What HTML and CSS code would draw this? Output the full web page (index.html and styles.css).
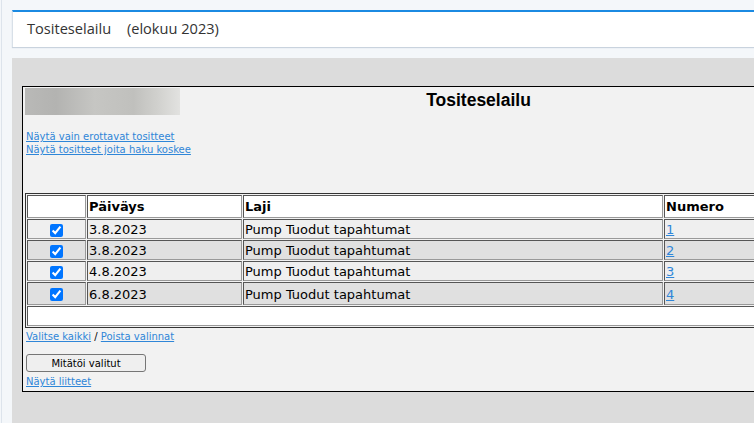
FILE: index.html
```html
<!DOCTYPE html>
<html lang="fi">
<head>
    <meta charset="UTF-8">
    <title>Tositeselailu</title>
    <link rel="stylesheet" href="styles.css">
</head>
<body>
    <div class="page">
        <div class="topbar">
            Tositeselailu <span class="period">(elokuu 2023)</span>
        </div>
        <div class="content">
            <div class="box">
                <div class="head">
                    <div class="logo"></div>
                    <h1>Tositeselailu</h1>
                    <div></div>
                </div>
                <div class="links">
                    <a href="#">Näytä vain erottavat tositteet</a><br>
                    <a href="#">Näytä tositteet joita haku koskee</a>
                </div>
                <table class="list">
                    <tr class="th">
                        <td class="chk"></td>
                        <td class="date">Päiväys</td>
                        <td class="kind">Laji</td>
                        <td class="num">Numero</td>
                    </tr>
                    <tr class="odd">
                        <td class="chk"><input type="checkbox" checked></td>
                        <td>3.8.2023</td>
                        <td>Pump Tuodut tapahtumat</td>
                        <td><a href="#">1</a></td>
                    </tr>
                    <tr class="even">
                        <td class="chk"><input type="checkbox" checked></td>
                        <td>3.8.2023</td>
                        <td>Pump Tuodut tapahtumat</td>
                        <td><a href="#">2</a></td>
                    </tr>
                    <tr class="odd">
                        <td class="chk"><input type="checkbox" checked></td>
                        <td>4.8.2023</td>
                        <td>Pump Tuodut tapahtumat</td>
                        <td><a href="#">3</a></td>
                    </tr>
                    <tr class="even tall">
                        <td class="chk"><input type="checkbox" checked></td>
                        <td>6.8.2023</td>
                        <td>Pump Tuodut tapahtumat</td>
                        <td><a href="#">4</a></td>
                    </tr>
                    <tr class="foot">
                        <td colspan="4">&nbsp;</td>
                    </tr>
                </table>
                <div class="select">
                    <a href="#">Valitse kaikki</a> / <a href="#">Poista valinnat</a>
                </div>
                <button class="cancel">Mitätöi valitut</button>
                <div class="attach"><a href="#">Näytä liitteet</a></div>
            </div>
        </div>
    </div>
</body>
</html>
```

FILE: styles.css
```css
html, body {
    margin: 0;
    padding: 0;
    overflow: hidden;
}
body {
    background: #f4f7fa;
    font-family: 'DejaVu Sans', Verdana, sans-serif;
    height: 423px;
}
.page {
    width: 1000px;
    padding: 10px 0 0 12px;
    border-left: 1px solid #dde4ec;
    margin-left: 1px;
    box-sizing: border-box;
    height: 423px;
}
.topbar {
    margin-left: -2px;
    background: #fff;
    border-top: 2px solid #1b8ae2;
    border-left: 1px solid #d8e0e8;
    box-shadow: 0 1px 1px #c9d3de;
    height: 35px;
    line-height: 33px;
    padding-left: 14px;
    font-family: 'Open Sans', sans-serif;
    font-size: 14.6px;
    color: #333;
}
.period {
    margin-left: 12px;
}
.content {
    margin: 11px 0 0 -2px;
    background: #dcdcdc;
    padding: 28px 0 0 10px;
    height: 400px;
}
.box {
    width: 906px;
    background: #f2f2f2;
    border: 1px solid #000;
    padding: 1px 0 3px 3px;
    font-size: 10px;
}
.head {
    display: grid;
    grid-template-columns: 155px 1fr 155px;
    align-items: start;
    margin-left: -1px;
}
.logo {
    height: 27px;
    background: linear-gradient(90deg, #b9b9b7 0%, #b3b3b1 20%, #c6c6c3 45%, #c0c0bd 70%, #d0d0cd 85%, #e2e2e0 100%);
}
.head h1 {
    margin: 2px 0 0;
    text-align: center;
    font-family: 'Liberation Sans', Arial, sans-serif;
    font-size: 17.5px;
    font-weight: bold;
    color: #000;
}
a {
    color: #2f86d8;
}
.links {
    margin-top: 15px;
    line-height: 13px;
}
.list {
    margin: 37px 0 0 -1px;
    border: 1px solid #333;
    border-spacing: 1px;
    background: #f2f2f2;
    width: 910px;
    font-size: 13px;
}
.list td {
    border: 1px solid #777;
    border-color: #555 #999 #999 #555;
    padding: 2px 2px 1px 1px;
    line-height: 15px;
    height: 15px;
}
.list .th td {
    background: #fff;
    font-weight: bold;
    padding-top: 3px;
    padding-bottom: 3px;
}
.list .chk {
    width: 57px;
    text-align: center;
    padding: 0;
}
.list .date {
    width: 150px;
}
.list .kind {
    width: 415px;
}
.chk input {
    margin: 0;
    vertical-align: middle;
}
.odd td {
    background: #efefef;
}
.even td {
    background: #e0e0e0;
}
.tall td {
    padding-top: 4px;
    padding-bottom: 2px;
}
.foot td {
    background: #fff;
    height: 14px;
}
.select {
    margin-top: 2px;
    line-height: 13px;
}
.cancel {
    display: block;
    margin-top: 11px;
    width: 120px;
    height: 18px;
    padding: 0;
    border: 1px solid #767676;
    border-radius: 3px;
    background: #efefef;
    font-family: 'DejaVu Sans', Verdana, sans-serif;
    font-size: 10px;
    color: #000;
}
.attach {
    margin-top: 3px;
    line-height: 13px;
}
```
